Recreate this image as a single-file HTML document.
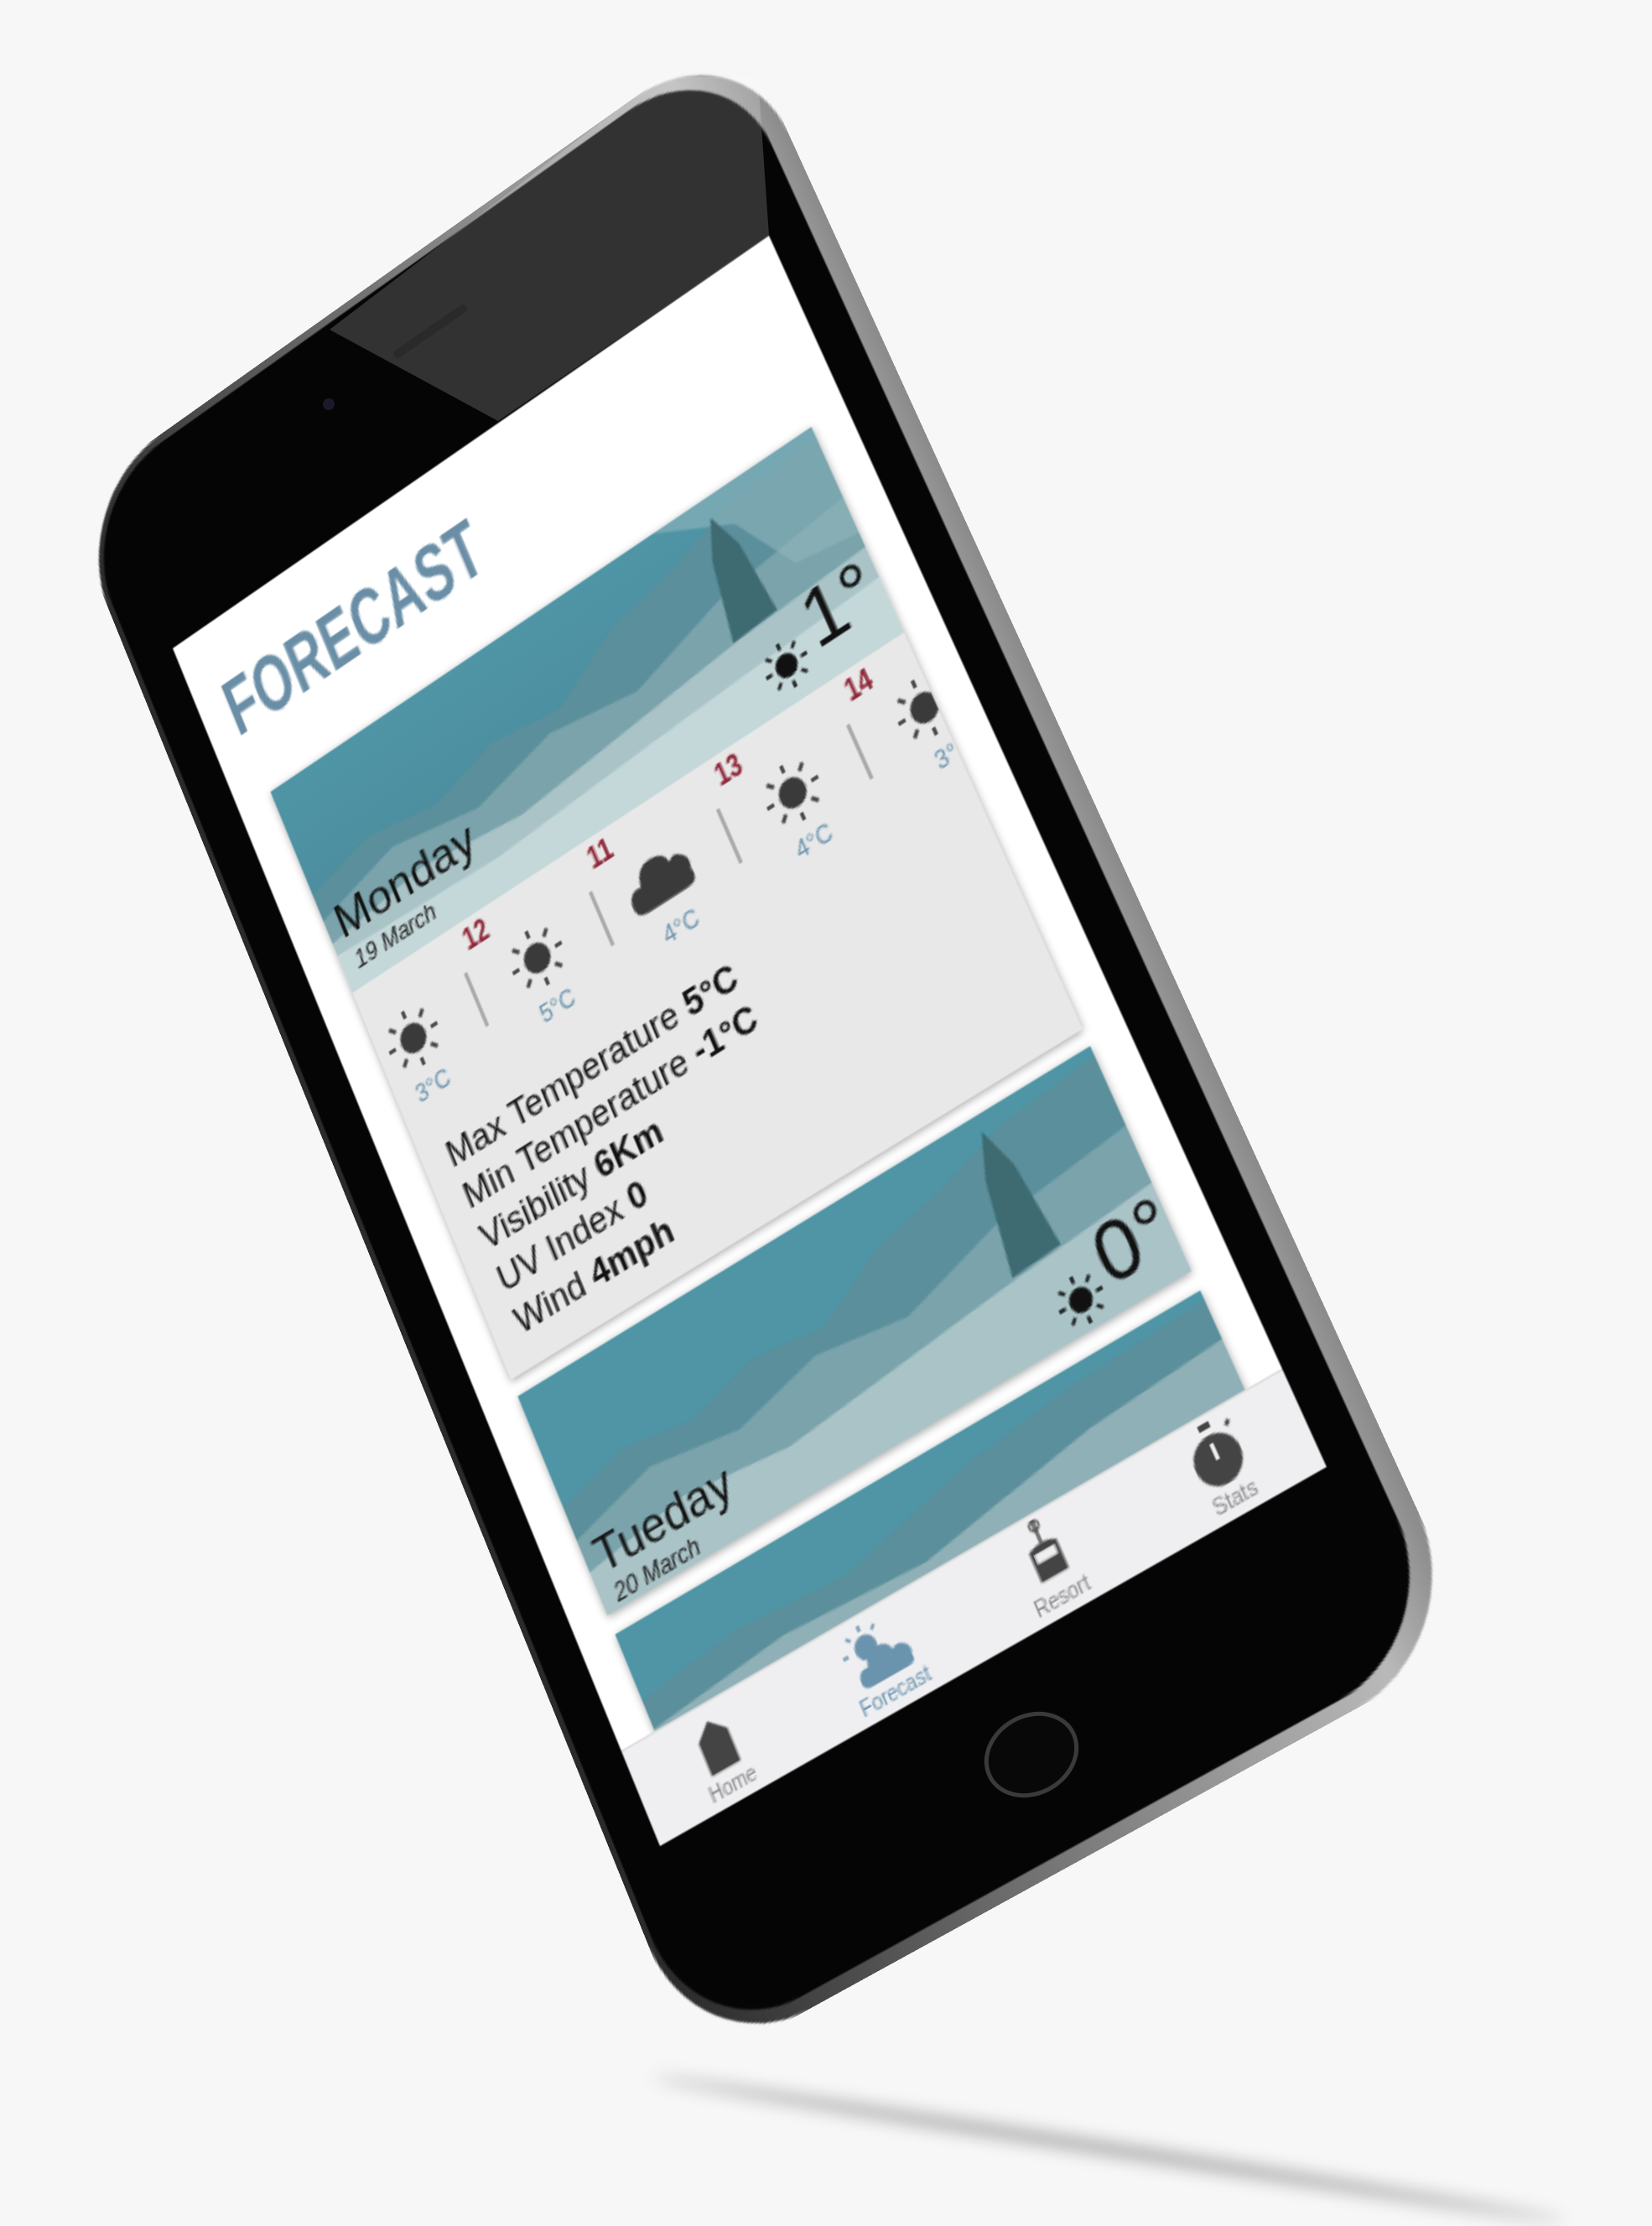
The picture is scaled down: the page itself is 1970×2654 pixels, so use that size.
<!DOCTYPE html>
<html><head><meta charset="utf-8">
<style>
html,body{margin:0;padding:0;}
body{width:1970px;height:2625px;background:#f7f7f7;position:relative;overflow:hidden;font-family:"Liberation Sans",sans-serif;}
.persp{position:absolute;left:0;top:0;width:375px;height:667px;transform-origin:0 0;
transform:matrix3d(1.7797,-1.3477,0,-0.00012677,0.7933,1.9235,0,-0.0000988,0,0,1,0,206,773,0,1);}
.metal{position:absolute;left:-25px;top:-104px;width:430px;height:874px;border-radius:64px;
background:linear-gradient(90deg,#2a2a2a 0%,#6a6a6a 40%,#b9b9b9 90%,#8a8a8a 100%);}
.body{position:absolute;left:-22px;top:-100px;width:417px;height:863px;border-radius:60px;background:#050505;}
.screen{position:absolute;left:0;top:0;width:375px;height:667px;background:#fff;overflow:hidden;}
.title{position:absolute;left:15px;top:24px;font-size:42px;font-weight:bold;color:#6a8ea6;transform:scaleX(0.68);transform-origin:0 0;letter-spacing:0.5px;}
.card{position:absolute;left:20px;width:335px;background:#e8e8e8;box-shadow:0 1px 4px rgba(0,0,0,.35);overflow:hidden;}
.img{position:absolute;left:0;top:0;width:335px;}
.day{position:absolute;left:6px;font-size:24px;color:#111;}
.date{position:absolute;left:8px;font-size:12px;font-style:italic;color:#222;}
.red{position:absolute;font-size:16px;font-weight:bold;color:#8b2032;transform:scaleX(.8);}
.sep{position:absolute;width:1.5px;height:30px;background:#aaa;}
.tmp{position:absolute;font-size:12px;color:#6b93ad;width:40px;text-align:center;}
.det{position:absolute;left:14px;top:206px;font-size:18px;line-height:23px;color:#111;}
.det b{font-weight:bold;}
.big{position:absolute;font-size:40px;color:#111;}
.tab{position:absolute;left:0;top:617px;width:375px;height:50px;background:#efeff1;border-top:1px solid #ddd;}
.tl{position:absolute;top:36px;width:70px;text-align:center;font-size:10px;color:#8a8a8a;}
</style></head><body>

<div style="position:absolute;left:780px;top:2470px;width:1100px;height:14px;background:rgba(0,0,0,.35);filter:blur(10px);transform:rotate(8.9deg);transform-origin:0 0;border-radius:50%;"></div>

<div class="persp">
  <div class="metal"></div>
  <div class="body"></div>
  <div class="screen">
    <div class="title">FORECAST</div>

    <div class="card" style="top:97px;height:332px;">
      <svg class="img" width="335" height="116" viewBox="0 0 335 116">
        <defs><linearGradient id="sk" x1="0" y1="0" x2="0" y2="1"><stop offset="0" stop-color="#4f95a6"/><stop offset="1" stop-color="#4a8898"/></linearGradient></defs>
        <rect width="335" height="116" fill="url(#sk)"/>
        <polygon points="0,60 40,50 80,56 120,45 160,50 200,30 240,22 280,10 335,5 335,116 0,116" fill="#5a8f9b"/>
        <polygon points="0,75 50,62 100,70 150,58 200,65 260,48 335,40 335,116 0,116" fill="#7aa3ab"/>
        <polygon points="0,88 60,80 120,86 200,78 260,72 335,68 335,116 0,116" fill="#a9c3c7"/>
        <polygon points="240,0 335,0 335,60 300,55 280,20" fill="#8fb5bd" opacity=".6"/>
        <polygon points="262,30 270,10 278,30 282,70 255,72" fill="#3e6a72"/>
        <polygon points="0,95 100,98 200,92 335,85 335,116 0,116" fill="#d0dfe1" opacity=".7"/>
      </svg>
      <div class="day" style="top:68px;">Monday</div>
      <div class="date" style="top:96px;">19 March</div>
      <svg style="position:absolute;left:262px;top:84px" width="26" height="26" viewBox="-13 -13 26 26"><circle r="6" fill="#111"/><g stroke="#111" stroke-width="1.7"><line x1="0" y1="-8.5" x2="0" y2="-12"/><line x1="0" y1="8.5" x2="0" y2="12"/><line x1="8.5" y1="0" x2="12" y2="0"/><line x1="-8.5" y1="0" x2="-12" y2="0"/><line x1="6" y1="6" x2="8.5" y2="8.5"/><line x1="-6" y1="6" x2="-8.5" y2="8.5"/><line x1="6" y1="-6" x2="8.5" y2="-8.5"/><line x1="-6" y1="-6" x2="-8.5" y2="-8.5"/></g></svg>
      <div class="big" style="left:292px;top:64px;">1°</div>

      <div class="red" style="left:64px;top:118px;">12</div>
      <div class="red" style="left:141px;top:118px;">11</div>
      <div class="red" style="left:218px;top:118px;">13</div>
      <div class="red" style="left:295px;top:118px;">14</div>
      <div class="sep" style="left:59px;top:140px;"></div>
      <div class="sep" style="left:136px;top:140px;"></div>
      <div class="sep" style="left:213px;top:140px;"></div>
      <div class="sep" style="left:290px;top:140px;"></div>

      <svg style="position:absolute;left:5px;top:138px" width="32" height="32" viewBox="-16 -16 32 32"><circle r="7.5" fill="#3a3a3a"/><g stroke="#3a3a3a" stroke-width="1.8"><line x1="0" y1="-11" x2="0" y2="-15"/><line x1="0" y1="11" x2="0" y2="15"/><line x1="11" y1="0" x2="15" y2="0"/><line x1="-11" y1="0" x2="-15" y2="0"/><line x1="7.5" y1="7.5" x2="10.5" y2="10.5"/><line x1="-7.5" y1="7.5" x2="-10.5" y2="10.5"/><line x1="7.5" y1="-7.5" x2="10.5" y2="-10.5"/><line x1="-7.5" y1="-7.5" x2="-10.5" y2="-10.5"/></g></svg>
      <svg style="position:absolute;left:82px;top:138px" width="32" height="32" viewBox="-16 -16 32 32"><circle r="7.5" fill="#3a3a3a"/><g stroke="#3a3a3a" stroke-width="1.8"><line x1="0" y1="-11" x2="0" y2="-15"/><line x1="0" y1="11" x2="0" y2="15"/><line x1="11" y1="0" x2="15" y2="0"/><line x1="-11" y1="0" x2="-15" y2="0"/><line x1="7.5" y1="7.5" x2="10.5" y2="10.5"/><line x1="-7.5" y1="7.5" x2="-10.5" y2="10.5"/><line x1="7.5" y1="-7.5" x2="10.5" y2="-10.5"/><line x1="-7.5" y1="-7.5" x2="-10.5" y2="-10.5"/></g></svg>
      <svg style="position:absolute;left:153px;top:137px" width="40" height="31" viewBox="0 0 36 28"><path d="M7 26 Q0 26 1 19 Q2 13 8 14 Q9 5 17 5 Q24 5 25 11 Q28 8 31 11 Q35 14 33 19 Q35 26 28 26 Z" fill="#3a3a3a"/></svg>
      <svg style="position:absolute;left:236px;top:138px" width="32" height="32" viewBox="-16 -16 32 32"><circle r="7.5" fill="#3a3a3a"/><g stroke="#3a3a3a" stroke-width="1.8"><line x1="0" y1="-11" x2="0" y2="-15"/><line x1="0" y1="11" x2="0" y2="15"/><line x1="11" y1="0" x2="15" y2="0"/><line x1="-11" y1="0" x2="-15" y2="0"/><line x1="7.5" y1="7.5" x2="10.5" y2="10.5"/><line x1="-7.5" y1="7.5" x2="-10.5" y2="10.5"/><line x1="7.5" y1="-7.5" x2="10.5" y2="-10.5"/><line x1="-7.5" y1="-7.5" x2="-10.5" y2="-10.5"/></g></svg>
      <svg style="position:absolute;left:313px;top:138px" width="32" height="32" viewBox="-16 -16 32 32"><circle r="7.5" fill="#3a3a3a"/><g stroke="#3a3a3a" stroke-width="1.8"><line x1="0" y1="-11" x2="0" y2="-15"/><line x1="0" y1="11" x2="0" y2="15"/><line x1="11" y1="0" x2="15" y2="0"/><line x1="-11" y1="0" x2="-15" y2="0"/><line x1="7.5" y1="7.5" x2="10.5" y2="10.5"/><line x1="-7.5" y1="-7.5" x2="-10.5" y2="-10.5"/><line x1="7.5" y1="-7.5" x2="10.5" y2="-10.5"/><line x1="-7.5" y1="7.5" x2="-10.5" y2="10.5"/></g></svg>
      <div class="tmp" style="left:1px;top:174px;">3°C</div>
      <div class="tmp" style="left:78px;top:174px;">5°C</div>
      <div class="tmp" style="left:153px;top:174px;">4°C</div>
      <div class="tmp" style="left:232px;top:174px;">4°C</div>
      <div class="tmp" style="left:309px;top:174px;">3°</div>

      <div class="det">Max Temperature <b>5°C</b><br>Min Temperature <b>-1°C</b><br>Visibility <b>6Km</b><br>UV Index <b>0</b><br>Wind <b>4mph</b></div>
    </div>

    <div class="card" style="top:438px;height:118px;">
      <svg class="img" width="335" height="120" viewBox="0 0 335 120">
        <rect width="335" height="120" fill="#4f95a6"/>
        <polygon points="0,60 40,50 80,56 120,45 160,50 200,30 240,22 280,10 335,5 335,120 0,120" fill="#5a8f9b"/>
        <polygon points="0,78 50,65 100,72 150,60 200,67 260,50 335,42 335,120 0,120" fill="#7aa3ab"/>
        <polygon points="0,95 60,86 120,92 200,84 260,78 335,72 335,120 0,120" fill="#a9c3c7"/>
        <polygon points="262,30 270,8 278,30 283,75 255,77" fill="#3e6a72"/>
      </svg>
      <div class="day" style="top:78px;">Tueday</div>
      <div class="date" style="top:104px;">20 March</div>
      <svg style="position:absolute;left:268px;top:90px" width="26" height="26" viewBox="-13 -13 26 26"><circle r="6" fill="#111"/><g stroke="#111" stroke-width="1.7"><line x1="0" y1="-8.5" x2="0" y2="-12"/><line x1="0" y1="8.5" x2="0" y2="12"/><line x1="8.5" y1="0" x2="12" y2="0"/><line x1="-8.5" y1="0" x2="-12" y2="0"/><line x1="6" y1="6" x2="8.5" y2="8.5"/><line x1="-6" y1="6" x2="-8.5" y2="8.5"/><line x1="6" y1="-6" x2="8.5" y2="-8.5"/><line x1="-6" y1="-6" x2="-8.5" y2="-8.5"/></g></svg>
      <div class="big" style="left:296px;top:70px;">0°</div>
    </div>

    <div class="card" style="top:566px;height:110px;">
      <svg class="img" width="335" height="110" viewBox="0 0 335 110">
        <rect width="335" height="110" fill="#4f95a6"/>
        <polygon points="0,35 60,28 120,32 200,15 260,8 335,5 335,110 0,110" fill="#5a8f9b"/>
        <polygon points="0,50 80,42 160,46 260,30 335,25 335,110 0,110" fill="#8fb0b6"/>
      </svg>
    </div>

    <div class="tab">
      <svg style="position:absolute;left:36px;top:6px" width="22" height="28" viewBox="0 0 22 30"><path d="M2 10 L11 2 L20 10 L20 28 L2 28 Z" fill="#444"/></svg>
      <div class="tl" style="left:12px;">Home</div>
      <svg style="position:absolute;left:122px;top:3px" width="38" height="32" viewBox="0 0 38 32"><circle cx="14" cy="12" r="6" fill="#6a93ad"/><g stroke="#6a93ad" stroke-width="1.5"><line x1="14" y1="1" x2="14" y2="4"/><line x1="4" y1="12" x2="1" y2="12"/><line x1="6" y1="4" x2="8" y2="6"/><line x1="22" y1="4" x2="20" y2="6"/></g><path d="M10 30 Q4 30 5 25 Q6 20 11 21 Q12 14 19 14 Q25 14 26 19 Q29 17 32 19 Q36 22 34 26 Q35 30 30 30 Z" fill="#6a93ad"/></svg>
      <div class="tl" style="left:106px;color:#6a93ad;">Forecast</div>
      <svg style="position:absolute;left:225px;top:2px" width="22" height="32" viewBox="0 0 22 34"><line x1="11" y1="0" x2="11" y2="12" stroke="#444" stroke-width="1.5"/><circle cx="11" cy="3" r="2.5" fill="none" stroke="#444"/><path d="M3 14 Q11 10 19 14 L19 30 L3 30 Z" fill="#444"/><rect x="5" y="16" width="12" height="5" fill="#efeff1"/></svg>
      <div class="tl" style="left:200px;">Resort</div>
      <svg style="position:absolute;left:316px;top:3px" width="28" height="32" viewBox="0 0 28 32"><rect x="11" y="0" width="6" height="3" fill="#444"/><circle cx="14" cy="18" r="12" fill="#444"/><line x1="14" y1="18" x2="14" y2="10" stroke="#efeff1" stroke-width="2"/><line x1="24" y1="6" x2="26" y2="4" stroke="#444" stroke-width="2"/></svg>
      <div class="tl" style="left:295px;">Stats</div>
    </div>
  </div>
</div>

<svg style="position:absolute;left:0;top:0" width="1970" height="2625">
  <polygon points="393,393 787,92 904,92 917,281 594,502" fill="#fff" opacity=".18"/>
  <line x1="474" y1="422" x2="552" y2="368" stroke="#2a2a2a" stroke-width="10" stroke-linecap="round"/>
  <circle cx="392" cy="482" r="7" fill="#1a1a2a"/>
  <ellipse cx="1230" cy="2092" rx="56" ry="46" transform="rotate(-30 1230 2092)" fill="#080808" stroke="#3a3a3a" stroke-width="5"/>
</svg>
</body></html>
